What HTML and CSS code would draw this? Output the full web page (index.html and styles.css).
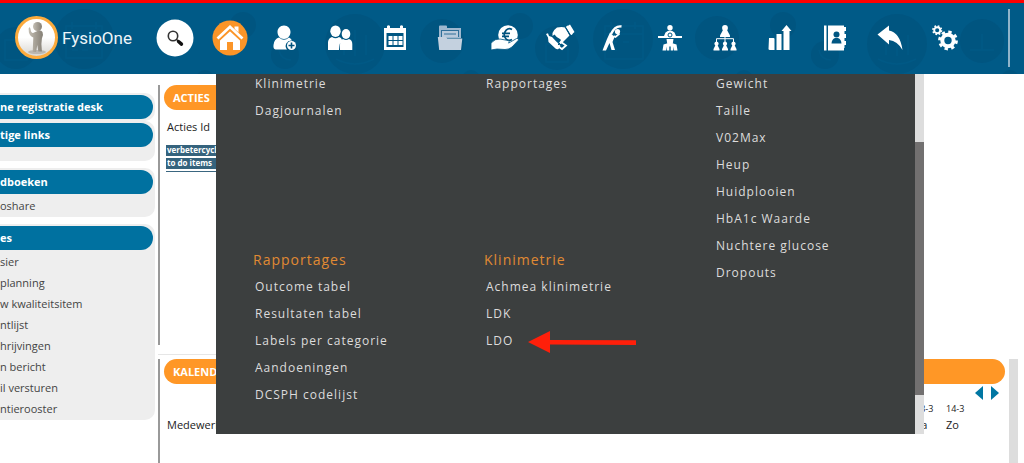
FILE: index.html
```html
<!DOCTYPE html>
<html lang="nl">
<head>
<meta charset="utf-8">
<title>FysioOne</title>
<link rel="stylesheet" href="styles.css">
</head>
<body>
<header class="topbar">
  <svg class="topbar-pattern" width="1024" height="71" viewBox="0 3 1024 71" aria-hidden="true">
    <g fill="#005580">
      <circle cx="16" cy="48" r="21"/><circle cx="84" cy="39" r="30"/><circle cx="243" cy="25" r="13"/>
      <circle cx="205" cy="79" r="9"/><circle cx="285" cy="55" r="14"/><circle cx="355" cy="44" r="30"/><circle cx="442" cy="41" r="22"/>
      <circle cx="520" cy="26" r="13"/><circle cx="471" cy="79" r="9"/><circle cx="557" cy="48" r="22"/><circle cx="623" cy="39" r="30"/>
      <circle cx="717" cy="38" r="22"/><circle cx="744" cy="79" r="9"/><circle cx="783" cy="25" r="13"/><circle cx="825" cy="55" r="14"/>
      <circle cx="897" cy="44" r="30"/><circle cx="982" cy="41" r="22"/><circle cx="1010" cy="79" r="9"/>
    </g>
    <g fill="none" stroke="#005985" stroke-width="1.5">
      <path d="M66 26h36v32H66zM66 34h36M72 22v7M96 22v7M72 42h6M82 42h6M72 50h6M82 50h6M5 40h22v20H5z"/>
      <path d="M605 26h38v33h-38zM605 34h38M611 22v7M635 22v7M611 42h6M623 42h6M611 50h6M546 44h22v18h-22z"/>
      <path d="M336 59q19 10 38 0M344 35v20M355 30v26M366 35v20M878 59q19 10 38 0M886 35v20M897 30v26M908 35v20M970 50h24M982 34v16M279 50q2 10 12 10M819 50q2 10 12 10"/>
    </g>
  </svg>
  <a class="brand" href="#">
    <svg width="43" height="43" viewBox="0 0 43 43" aria-hidden="true">
      <defs>
        <linearGradient id="floor" x1="0" y1="0" x2="0" y2="1"><stop offset=".5" stop-color="#fff"/><stop offset="1" stop-color="#d5d2cd"/></linearGradient>
        <linearGradient id="clay" x1="0" y1="0" x2="1" y2="0"><stop offset="0" stop-color="#c4beb3"/><stop offset="1" stop-color="#857f75"/></linearGradient>
      </defs>
      <circle cx="21.500" cy="21.500" r="20" fill="url(#floor)" stroke="#fdab3c" stroke-width="3"/>
      <ellipse cx="22" cy="36" rx="9" ry="2" fill="#bbb7b0"/>
      <g fill="url(#clay)">
        <circle cx="22.500" cy="10.500" r="4.500"/>
        <path d="M18 17q-2 0-2.500-4l-.7-2-1.200 1.500.3 4q1.200 4 4.400 5l-.3 7-.3 7.500h3.400l1.200-7 1 6.500h3.600l-.5-7.500.5-5.500q2-3 .6-6.500-1-1.800-3.500-1.700z"/>
      </g>
    </svg>
    <span class="brand-name">FysioOne</span>
  </a>
  <nav class="tools" aria-label="Hoofdmenu">
    <button class="tool" aria-label="Zoeken"><svg width="38" height="38" viewBox="0 0 38 38"><circle cx="19" cy="19" r="18.500" fill="#fff"/><circle cx="17" cy="17" r="4.700" fill="none" stroke="#333" stroke-width="1.600"/><path d="M20.500 20.500 22.500 22" stroke="#222" stroke-width="1.500"/><path d="m22.500 22.500 3 2.600" stroke="#111" stroke-width="3.400" stroke-linecap="round"/></svg></button>
    <button class="tool" aria-label="Start"><svg width="36" height="36" viewBox="0 0 36 36"><circle cx="18" cy="18" r="17.500" fill="#fb9528"/><path fill="#fff" d="M26.500 13.500V6.500h-4V10zM18 10.500 28 20v10h-7v-8h-6v8H8V20z"/><path d="M5.500 19.500 18 7.800 30.500 19.500" fill="none" stroke="#fb9528" stroke-width="5"/><path d="M5.500 18.500 18 6.800 30.500 18.500" fill="none" stroke="#fff" stroke-width="2.800"/></svg></button>
    <button class="tool" aria-label="Nieuwe cliënt"><svg width="26" height="26" viewBox="0 0 26 26"><path fill="#fff" d="M12 .5c4 0 6.500 3 6.500 6.500S16 14 12 14 5.500 10.500 5.500 7 8 .5 12 .5zM7 12.500q5 4.500 10 0 2 .8 3 3a5.500 5.500 0 0 0-5 9H3.500Q1 24 1.500 20 2 14 7 12.500z"/><circle cx="19.500" cy="20.500" r="4.500" fill="#fff"/><path d="M19.500 17.500v6M16.500 20.500h6" stroke="#00527d" stroke-width="1.600"/></svg></button>
    <button class="tool" aria-label="Cliënten"><svg width="26" height="26" viewBox="0 0 26 26"><g fill="#fff"><ellipse cx="8.500" cy="6.200" rx="5.200" ry="5.800"/><ellipse cx="19" cy="9" rx="4.300" ry="4.900"/><path d="M5 12q3.500 2.500 7 0 2.500.5 3 3-2.500 2-3 10H1V17q.5-4 4-5zM16 14q3 2 6 0 3.300 1 3.300 5v6H13v-5q0-5 3-6z"/></g></svg></button>
    <button class="tool" aria-label="Agenda"><svg width="26" height="26" viewBox="0 0 26 26"><path fill="#fff" d="M2 3h3V1q1.500-1.500 3 0v2h10V1q1.500-1.500 3 0v2h3v22H2z"/><path d="M4.500 8h17v14h-17z" fill="#005682"/><path fill="#fff" d="M6.500 11h4v4h-4zM11.500 11h4v4h-4zM16.500 11h4v4h-4zM6.500 16h4v4h-4zM11.500 16h4v4h-4zM16.500 16h4v4h-4z"/></svg></button>
    <button class="tool" aria-label="Dossiers"><svg width="26" height="26" viewBox="0 0 26 26"><path fill="#9eb8cf" d="M2 3V1.500Q2 .5 3 .5h6q1 0 1 1V3h14v10H2z"/><path fill="#2f6f99" d="M4 5h18v7H4z"/><path fill="#b9cadb" d="M5 6h16v6H5z"/><path fill="#2f6f99" d="M7 8.500h12v1H7z"/><path fill="#c4d1df" d="M.8 12h8l1.500 1.500h15L24 25H2.200z"/></svg></button>
    <button class="tool" aria-label="Financieel"><svg width="28" height="26" viewBox="0 0 28 26"><circle cx="17" cy="10" r="9.800" fill="#fff"/><path d="M21 4.500q-3-2-5.800.6-2 2.200-2 4.600t2 4.600q2.800 2 5.800.2M11 8.300h8M11 11.300h7" fill="none" stroke="#00527d" stroke-width="1.700"/><path d="M0 18q4-4.500 9-4l8 1.500q2 1 .6 2.600l8-4.600q2.300-.5 2 1.500L21 22q-3 2.500-7 2.500L6 24l-6 1z" fill="#fff" stroke="#005682" stroke-width=".8"/></svg></button>
    <button class="tool" aria-label="Relaties"><svg width="30" height="27" viewBox="0 0 30 27"><path fill="#fff" d="m21 3 4-2.500L29.500 8l-3.500 3zM7.500 9q2-4 4.500-5.500 5-1 8 0l4.500 8-8 8q-1.500 1-2.500-.5l2-3-1-1q-4-2-5.500-4.500L7.500 12zM1 10l2-.7L4 12l3 1 8.500 9-2 3q-1.500.7-3-.5L3.500 18 3 13.500z"/><path d="m22 2 5 8.500M12 18.500l-3 3.500M16 18l5 3.500-4 3.500-3-2" fill="none" stroke="#fff" stroke-width="1.800"/><path d="m20.500 3.500 4.800 8M13 21l2-2M16 23l2-2" stroke="#00527d"/></svg></button>
    <button class="tool" aria-label="Oefeningen"><svg width="26" height="26" viewBox="0 0 26 26"><circle cx="15.500" cy="6.500" r="2.600" fill="#fff"/><path d="M19.500 1.500Q13 .5 9 9" fill="none" stroke="#fff" stroke-width="2.400"/><path d="m17.500 8.500-4 3.500-2-1" fill="none" stroke="#fff" stroke-width="1.800"/><path d="M8 7.500 12.500 12l-2 5 2.500 8H9.500L7.500 18 4 25.500H.5L5 14z" fill="#fff"/></svg></button>
    <button class="tool" aria-label="Behandeling"><svg width="26" height="26" viewBox="0 0 26 26"><g fill="#fff"><circle cx="13" cy="2.700" r="2.700"/><path d="M8.500 7.500Q13 3.500 17.500 7.500l1.500 3.500H7zM1 11h24v2H1zM9.500 14h7l-.8 5h-5.400zM5.500 25.500l1-6q6.500-2.500 13 0l1 6h-3.700l-.8-4v4h-2.300v-4h-1.400v4H10v-4l-.8 4z"/></g><circle cx="13" cy="10" r="2" fill="#fff" stroke="#005a87"/></svg></button>
    <button class="tool" aria-label="Organisatie"><svg width="26" height="26" viewBox="0 0 26 26"><defs><path id="person" d="M0 0A2.200 2.200 0 0 1 1.200 4L3 7.500V9h-6V7.500L-1.200 4A2.200 2.200 0 0 1 0 0z"/></defs><g fill="#fff"><circle cx="13" cy="3" r="2.900"/><path d="m11 5-3 5.500V12h10v-1.500L15 5z"/><use href="#person" x="4.500" y="16.500"/><use href="#person" x="13" y="16.500"/><use href="#person" x="21.500" y="16.500"/></g><path d="M4.500 17v-3.300h17V17M13 12v5" fill="none" stroke="#fff"/></svg></button>
    <button class="tool" aria-label="Statistieken"><svg width="26" height="26" viewBox="0 0 26 26"><path fill="#fff" d="M2 13h4.500q1 0 1 1v11H3q-1.500 0-1.500-1zM9.500 9h5v16h-5zM19.500 0 24.500 6h-2v19h-6V6h-2z"/></svg></button>
    <button class="tool" aria-label="Adresboek"><svg width="26" height="26" viewBox="0 0 26 26"><path fill="#fff" d="M2 .5h2.500v25H2zM6 .5h16V2h2v4h-1.500v3H24v4h-1.500v3H24v4h-1.500v3H22v2.500H6z"/><circle cx="14.500" cy="9.500" r="3" fill="#005682"/><path d="M9.500 18.500q.3-4.500 3.500-5.500h3q3.200 1 3.500 5.500zM5 1h1v24H5z" fill="#005682"/></svg></button>
    <button class="tool" aria-label="Terug"><svg width="26" height="26" viewBox="0 0 26 26"><path fill="#fff" d="M.5 9.500 12 .5v5q11 2 13.500 19.500-5-9-13.500-10v4.500z"/></svg></button>
    <button class="tool" aria-label="Instellingen"><svg width="26" height="26" viewBox="0 0 26 26"><g fill="none" stroke="#fff"><circle cx="16" cy="15.500" r="5.700" stroke-width="4"/><circle cx="16" cy="15.500" r="8.500" stroke-width="2.800" stroke-dasharray="3.340 3.340"/><circle cx="5.200" cy="5.200" r="3" stroke-width="1.900"/><circle cx="5.200" cy="5.200" r="4.300" stroke-width="1.600" stroke-dasharray="1.690 1.690"/></g></svg></button>
  </nav>
  <div class="topbar-rule"></div>
</header>

<div class="workspace">
  <aside class="sidebar">
    <section class="box"><h2 class="box-title">ne registratie desk</h2></section>
    <section class="box box-short"><h2 class="box-title">tige links</h2></section>
    <section class="box box-spaced"><h2 class="box-title">dboeken</h2>
      <ul class="box-list"><li><a href="#">oshare</a></li></ul>
    </section>
    <section class="box box-spaced"><h2 class="box-title">es</h2>
      <ul class="box-list">
        <li><a href="#">sier</a></li><li><a href="#">planning</a></li><li><a href="#">w kwaliteitsitem</a></li><li><a href="#">ntlijst</a></li>
        <li><a href="#">hrijvingen</a></li><li><a href="#">n bericht</a></li><li><a href="#">il versturen</a></li><li><a href="#">ntierooster</a></li>
      </ul>
    </section>
  </aside>
  <main class="panels">
    <div class="actions-row">
      <section class="panel panel-actions">
        <h2 class="panel-title">ACTIES</h2>
        <p class="panel-label">Acties Id</p>
        <ul class="tags"><li>verbetercyclus</li><li>to do items</li></ul>
      </section>
    </div>
    <div class="calendar-row">
      <section class="panel panel-calendar">
        <h2 class="panel-title">KALENDER</h2>
        <div class="pager">
          <button class="page-button" aria-label="Vorige"><svg width="8" height="14" viewBox="0 0 8 14"><path d="M8 0v14L0 7z" fill="#0077a3"/></svg></button>
          <button class="page-button" aria-label="Volgende"><svg width="8" height="14" viewBox="0 0 8 14"><path d="M0 0v14l8-7z" fill="#0077a3"/></svg></button>
        </div>
        <table class="days">
          <tr class="dates"><td></td><td>13-3</td><td>14-3</td></tr>
          <tr><th scope="row">Medewerker</th><td>Za</td><td>Zo</td></tr>
        </table>
      </section>
      <div class="page-scroll"></div>
    </div>
  </main>
</div>

<div class="mega">
  <div class="mega-columns">
    <div class="mega-column">
      <ul class="links links-first"><li><a href="#">Klinimetrie</a></li><li><a href="#">Dagjournalen</a></li></ul>
      <h3 class="mega-title">Rapportages</h3>
      <ul class="links"><li><a href="#">Outcome tabel</a></li><li><a href="#">Resultaten tabel</a></li><li><a href="#">Labels per categorie</a></li><li><a href="#">Aandoeningen</a></li><li><a href="#">DCSPH codelijst</a></li></ul>
    </div>
    <div class="mega-column">
      <ul class="links links-first"><li><a href="#">Rapportages</a></li></ul>
      <h3 class="mega-title">Klinimetrie</h3>
      <ul class="links"><li><a href="#">Achmea klinimetrie</a></li><li><a href="#">LDK</a></li>
        <li class="marked"><a href="#">LDO</a><svg class="arrow" width="108" height="22" viewBox="0 0 108 22" aria-hidden="true"><path d="M0 11 22 0v9l86 .3v4.800L22 13.500V22z" fill="#ff1f0a"/></svg></li></ul>
    </div>
    <div class="mega-column">
      <ul class="links"><li><a href="#">Gewicht</a></li><li><a href="#">Taille</a></li><li><a href="#">V02Max</a></li><li><a href="#">Heup</a></li><li><a href="#">Huidplooien</a></li><li><a href="#">HbA1c Waarde</a></li><li><a href="#">Nuchtere glucose</a></li><li><a href="#">Dropouts</a></li></ul>
    </div>
  </div>
  <div class="mega-scroll"><div class="mega-thumb"></div></div>
</div>
</body>
</html>
```
FILE: styles.css
```css
* { box-sizing: border-box; }
body {
  margin: 0;
  min-height: 100vh;
  display: flex;
  flex-direction: column;
  position: relative;
  overflow: hidden;
  background: #fff;
  color: #222;
  font-family: "Open Sans", "Noto Sans", sans-serif;
  font-size: 11px;
}
h2, h3, p, ul { margin: 0; padding: 0; }
ul { list-style: none; }
a { color: inherit; text-decoration: none; }
button { padding: 0; border: 0; background: none; cursor: pointer; }
svg { display: block; flex: none; }

.topbar {
  position: relative;
  display: flex;
  align-items: center;
  height: 74px;
  padding-bottom: 2px;
  border-top: 3px solid #f00;
  background: #005a87;
  overflow: hidden;
}
.topbar-pattern { position: absolute; top: 0; left: 0; }
.brand {
  position: relative;
  display: flex;
  align-items: center;
  gap: 4px;
  width: 147px;
  padding-left: 15px;
  color: #eef5f9;
}
.brand-name { font-family: Roboto, sans-serif; font-size: 17px; }
.tools { position: relative; display: flex; }
.tool { display: flex; justify-content: center; align-items: center; width: 55px; height: 40px; }
.topbar-rule { position: relative; width: 2px; height: 58px; margin: 0 14px 0 auto; background: #8fb4ca; }

.workspace { flex: 1; display: flex; }
.sidebar { width: 158px; padding: 19px 3px 0 0; }
.box { padding: 2px 2px 2px 0; border-radius: 0 10px 10px 0; background: #eee; }
.box-short { padding-bottom: 14px; }
.box-spaced { margin-top: 7px; }
.box-title {
  height: 24px;
  border-radius: 0 12px 12px 0;
  background: #0071a0;
  color: #fff;
  font-size: 11px;
  font-weight: 700;
  line-height: 24px;
}
.box-list { margin-bottom: -1px; padding-top: 1px; color: #444; line-height: 21px; }

.panels { flex: 1; display: flex; flex-direction: column; padding-top: 11px; }
.panel { border-left: 2px solid #999; padding-left: 4px; }
.actions-row { margin-bottom: 4px; padding-bottom: 9px; border-bottom: 1px solid #e6e6e6; width: 700px; }
.panel-actions { height: 260px; }
.panel-title {
  height: 25px;
  padding-left: 9px;
  border-radius: 13px;
  background: #ff9726;
  color: #fff;
  font-size: 11px;
  font-weight: 700;
  line-height: 25px;
}
.panel-label { padding: 9px 3px 10px; line-height: 16px; }
.tags { width: 110px; margin-left: 2px; border-bottom: 1px solid #3a6680; }
.tags li {
  height: 11px;
  margin-bottom: 2px;
  padding-left: 1px;
  background: #35637d;
  color: #fff;
  font-size: 8px;
  font-weight: 700;
  line-height: 10px;
}
.calendar-row { flex: 1; display: flex; gap: 4px; padding-right: 6px; }
.panel-calendar { flex: 1; }
.page-scroll { width: 9px; background: #ddd; }
.pager { display: flex; justify-content: flex-end; gap: 8px; padding: 2px 6px 0 0; }
.days { width: 100%; margin-top: 1px; border-collapse: collapse; line-height: 16px; }
.days td, .days th { padding: 0 0 0 3px; text-align: left; font-weight: 400; }
.days td + td, .days th ~ td { width: 31px; padding: 0; }
.days tr > :last-child { width: 59px; }
.dates { font-size: 9px; }

.mega {
  position: absolute;
  top: 74px;
  left: 216px;
  display: flex;
  width: 708px;
  height: 360px;
  background: #3c3f3f;
  color: #dcdcdc;
  letter-spacing: 1px;
}
.mega-columns { flex: 1; display: grid; grid-template-columns: 231px 230px 1fr; padding-left: 39px; align-items: start; }
.mega-column { margin-top: -4px; }
.links { font-size: 12px; line-height: 27px; }
.links-first { height: 176px; }
.mega-title { margin-left: -2px; color: #e08a33; font-size: 14px; font-weight: 400; line-height: 27px; }
.marked { position: relative; }
.arrow { position: absolute; top: 4px; left: 42px; }
.mega-scroll { width: 9px; padding-top: 68px; background: #ddd; }
.mega-thumb { height: 253px; background: #727070; }
```
